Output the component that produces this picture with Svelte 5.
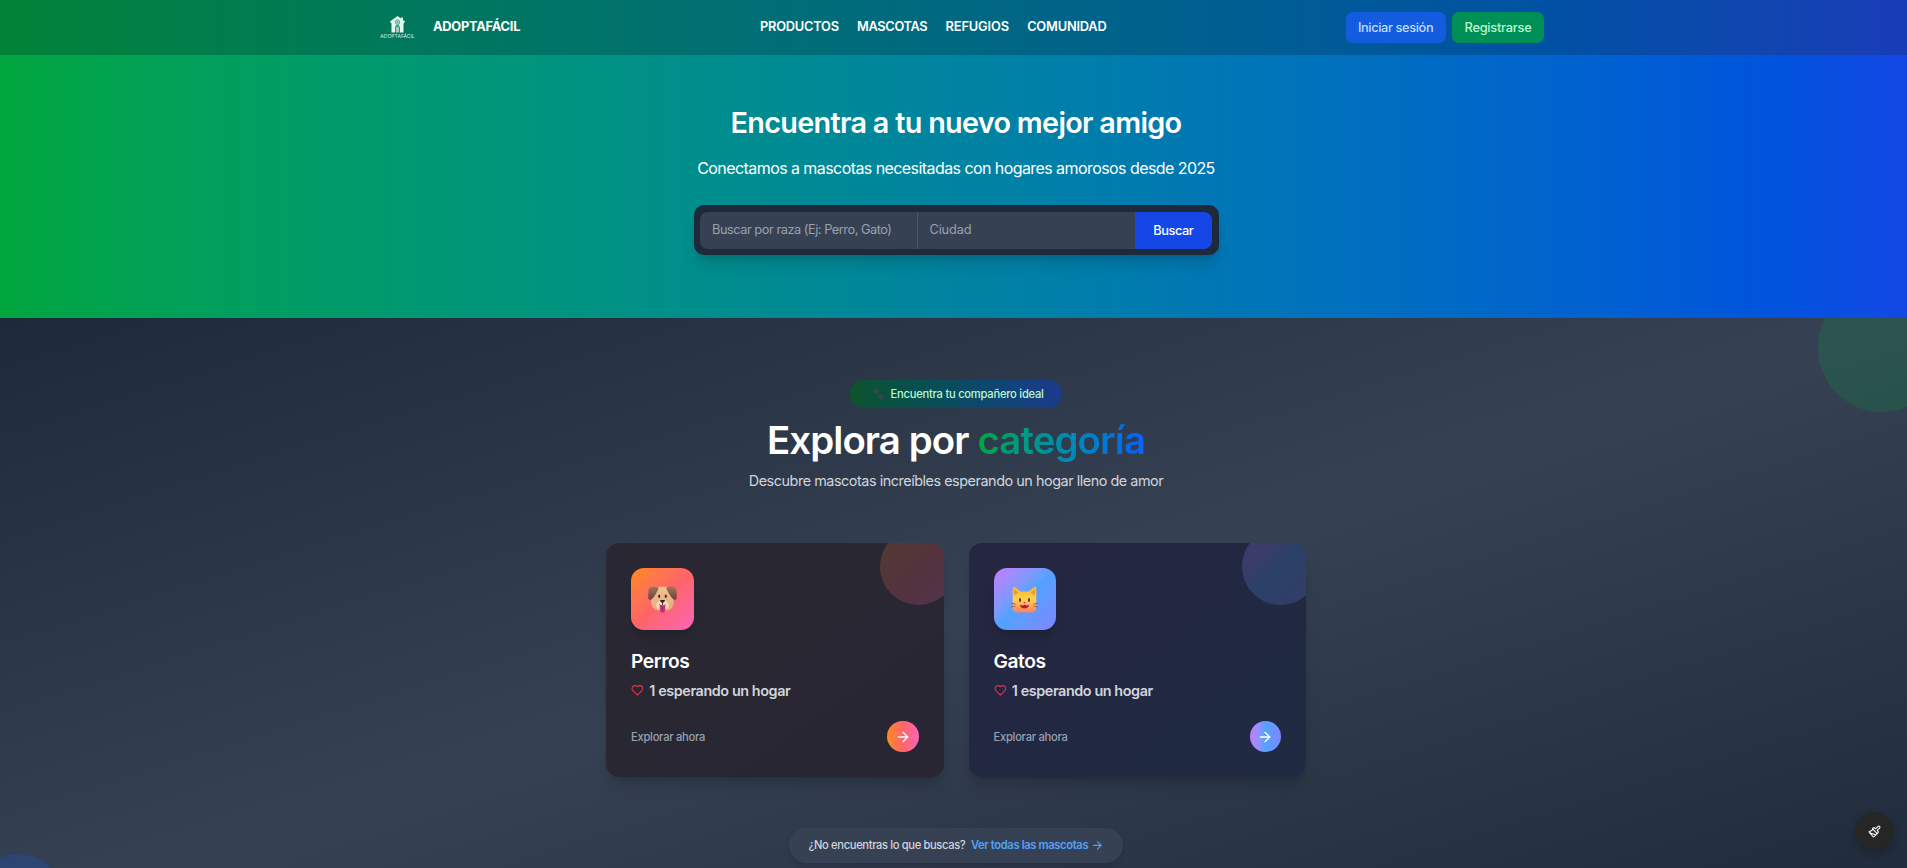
<script>
  const links = [
    { label: 'PRODUCTOS', spacing: -0.22 },
    { label: 'MASCOTAS', spacing: -0.33 },
    { label: 'REFUGIOS', spacing: -0.12 },
    { label: 'COMUNIDAD', spacing: -0.18 }
  ];
  const cards = [
    { kind: 'dog', name: 'Perros', count: 1 },
    { kind: 'cat', name: 'Gatos', count: 1 }
  ];
</script>

{#snippet arrow(size)}
  <svg width={size} height={size} viewBox="0 0 24 24" fill="none" stroke="currentColor" stroke-width="2" stroke-linecap="round" stroke-linejoin="round"><path d="M5 12h14" /><path d="m12 5 7 7-7 7" /></svg>
{/snippet}

<div class="page">
  <header>
    <div class="bar">
      <div class="brand">
        <div class="logo">
          <svg width="15" height="17" viewBox="1.500 0 15 17">
            <path d="M9 0 1.500 5.400 2.500 7.200 3 6.900V16.400h3.700V11.500a2.300 2.300 0 0 1 4.600 0v4.900H15V6.900l.5.300 1-1.800-2-1.400V1.600h-2v1z" fill="#e4f7ef" />
            <circle cx="9" cy="6.200" r="2.200" fill="none" stroke="#2c8b70" stroke-width=".8" />
            <path d="M7.400 9.200h3.200M9 4.800v2.800M7.600 6.200h2.800" stroke="#2c8b70" stroke-width=".6" />
            <path d="M7.500 16.400v-4.600a1.500 1.500 0 0 1 3 0v4.600z" fill="#9fd3c0" />
          </svg>
          <span>ADOPTAFÁCIL</span>
        </div>
        <strong>ADOPTAFÁCIL</strong>
      </div>
      <nav>
        {#each links as l}<a href="#top" style:letter-spacing="{l.spacing}px">{l.label}</a>{/each}
      </nav>
      <div class="auth">
        <button class="login">Iniciar sesión</button>
        <button class="signup">Registrarse</button>
      </div>
    </div>
  </header>

  <section class="hero">
    <h1>Encuentra a tu nuevo mejor amigo</h1>
    <p>Conectamos a mascotas necesitadas con hogares amorosos desde 2025</p>
    <div class="search">
      <div class="field breed">Buscar por raza (Ej: Perro, Gato)</div>
      <div class="field city">Ciudad</div>
      <button>Buscar</button>
    </div>
  </section>

  <section class="explore">
    <div class="orb green"></div>
    <div class="orb blue"></div>
    <div class="tag">
      <svg width="11" height="12" viewBox="0 0 11 12" fill="#4b4358">
        <ellipse cx="3" cy="4" rx="1.7" ry="1.4" /><circle cx=".9" cy="2.6" r=".7" /><circle cx="2.2" cy="1.2" r=".8" /><circle cx="4" cy="1.2" r=".8" /><circle cx="5.2" cy="2.6" r=".7" />
        <ellipse cx="7.8" cy="9.6" rx="1.7" ry="1.4" /><circle cx="5.7" cy="8.2" r=".7" /><circle cx="7" cy="6.8" r=".8" /><circle cx="8.8" cy="6.8" r=".8" /><circle cx="10.1" cy="8.2" r=".7" />
      </svg>
      <span>Encuentra tu compañero ideal</span>
    </div>
    <h2>Explora por <em>categoría</em></h2>
    <p class="lead">Descubre mascotas increíbles esperando un hogar lleno de amor</p>

    <div class="cards">
      {#each cards as c}
        <article class={c.kind}>
          <div class="bubble"></div>
          <div class="tile">
            {#if c.kind === 'dog'}
              <svg width="29" height="27" viewBox="0 0 29 27">
                <defs>
                  <linearGradient id="fur" x1="0" y1="0" x2="0" y2="1"><stop offset="0" stop-color="#f2c08e" /><stop offset="1" stop-color="#e9ab80" /></linearGradient>
                  <linearGradient id="ear" x1="0" y1="0" x2="0" y2="1"><stop offset="0" stop-color="#a87358" /><stop offset="1" stop-color="#65413f" /></linearGradient>
                </defs>
                <path d="M7 .8h15c2.400 4 3.700 9 3.700 15 0 5-3 8.700-7 8.700h-8.400c-4 0-7-3.700-7-8.700C3.300 9.800 4.600 4.800 7 .8z" fill="url(#fur)" />
                <path d="M8.800.8C4 0 .6 1.800.4 5L.2 11.500c.1 2.300 2.300 3 3.800 1.600C6.500 10.500 9 6.500 10.500 2.500 10.700 1.500 10 1 8.800.8z" fill="url(#ear)" />
                <path d="M20.200.8C25 0 28.400 1.800 28.600 5l.2 6.500c-.1 2.300-2.300 3-3.800 1.600-2.500-2.600-5-6.600-6.500-10.600-.2-1 .5-1.500 1.700-1.700z" fill="url(#ear)" />
                <path d="M14.500 14c3.200 0 6.300 2.400 6.300 5.300s-2.300 4.900-6.300 4.900-6.300-2-6.300-4.900 3.100-5.300 6.300-5.300z" fill="#f8d9b8" />
                <ellipse cx="11.200" cy="10.200" rx="1" ry="1.700" fill="#35242b" /><ellipse cx="17.800" cy="10.200" rx="1" ry="1.700" fill="#35242b" />
                <path d="M12.200 14h4.600c.3 1.600-1.200 2.600-2.300 2.600s-2.600-1-2.300-2.600z" fill="#35242b" />
                <path d="M14.500 16v3M11.300 18.500c.6 1.700 2.500 1.600 3.200.5.700 1.100 2.600 1.200 3.200-.5" fill="none" stroke="#35242b" stroke-width=".9" />
                <path d="M11.700 20h5.600v3.300c0 4.500-5.600 4.500-5.600 0z" fill="#c92f79" /><path d="M14.500 20.300v3.500" stroke="#8e205f" stroke-width=".7" />
              </svg>
            {:else}
              <svg width="27" height="27" viewBox="0 0 27 27">
                <defs><linearGradient id="cat" x1="0" y1="0" x2="0" y2="1"><stop offset="0" stop-color="#f9b52d" /><stop offset=".5" stop-color="#ffd14b" /><stop offset="1" stop-color="#ff8067" /></linearGradient></defs>
                <path d="M1.700 2.200C1.700.6 3 .4 4 1.200L9.500 5.400h8L23 1.200c1-.8 2.300-.6 2.300 1V21c0 3.500-2 5.400-5 5.400H6.700c-3 0-5-1.900-5-5.400z" fill="url(#cat)" />
                <path d="M3 3.500v6l4.500-3zM24 3.500v6l-4.500-3z" fill="#e7832b" opacity=".65" />
                <ellipse cx="9" cy="14" rx="1" ry="1.900" fill="#4c2431" /><ellipse cx="18" cy="14" rx="1" ry="1.900" fill="#4c2431" />
                <path d="M12.200 16h2.600l-1.300 1.800z" fill="#e3347c" />
                <path d="M9 18.800c2 1.200 3.500.9 4.500-.2 1 1.100 2.500 1.400 4.500.2-.2 5-8.800 5-9 0z" fill="#a61d43" />
                <path d="M0 17.300l4.500.7M0 21l4.500-.8M27 17.300l-4.500.7M27 21l-4.500-.8" stroke="#bd4d48" stroke-width=".9" />
              </svg>
            {/if}
          </div>
          <h3>{c.name}</h3>
          <div class="count">
            <svg width="12.800" height="12.800" viewBox="0 0 24 24" fill="none" stroke="#e7304a" stroke-width="2" stroke-linecap="round" stroke-linejoin="round"><path d="M19 14c1.490-1.460 3-3.210 3-5.500A5.500 5.500 0 0 0 16.500 3c-1.760 0-3 .5-4.500 2-1.500-1.500-2.740-2-4.500-2A5.500 5.500 0 0 0 2 8.500c0 2.300 1.500 4.050 3 5.500l7 7Z" /></svg>
            <span>{c.count} esperando un hogar</span>
          </div>
          <div class="foot"><span>Explorar ahora</span><div class="go">{@render arrow(16)}</div></div>
        </article>
      {/each}
    </div>

    <div class="more">
      <span>¿No encuentras lo que buscas?</span>
      <a href="#top">Ver todas las mascotas</a>
      {@render arrow(12.8)}
    </div>
  </section>

  <button class="fab" aria-label="Tema">
    <svg width="13" height="13" viewBox="0 0 24 24" fill="none" stroke="#fff" stroke-width="2" stroke-linecap="round" stroke-linejoin="round"><path d="m14.622 17.897-10.680-2.913" /><path d="M18.376 2.622a1 1 0 1 1 3.002 3.002L17.360 9.643a.5.5 0 0 0 0 .707l.944.944a2.410 2.410 0 0 1 0 3.408l-.944.944a.5.5 0 0 1-.707 0L8.354 7.348a.5.5 0 0 1 0-.707l.944-.944a2.410 2.410 0 0 1 3.408 0l.944.944a.5.5 0 0 0 .707 0z" /><path d="M9 8c-1.804 2.710-3.970 3.460-6.583 3.948a.507.507 0 0 0-.302.819l7.320 8.883a1 1 0 0 0 1.185.204C12.735 20.405 16 16.792 16 15" /></svg>
  </button>
</div>

<style>
  :global(body) { overflow: hidden; background: #1e2939; }
  .page { width: 1912px; height: 868px; overflow: hidden; font-family: Inter, "Liberation Sans", sans-serif; color: #fff; }
  * { box-sizing: border-box; }
  h1, h2, h3, p { margin: 0; }
  svg { display: block; flex: none; }
  button { border: 0; padding: 0; font: inherit; color: inherit; white-space: nowrap; }
  a { color: inherit; text-decoration: none; }

  header { height: 55px; background: linear-gradient(to right in oklab, #008236, #193cb8); }
  .bar { width: 1164px; height: 54px; margin-left: 380px; display: flex; align-items: center; justify-content: space-between; font-size: 12.8px; }
  .brand { width: 141px; display: flex; align-items: center; gap: 18px; }
  .brand strong { font-weight: 700; letter-spacing: -.22px; }
  .logo { width: 35px; display: flex; flex-direction: column; align-items: center; color: #d5f0e5; }
  .logo span { font-size: 5px; line-height: 6px; letter-spacing: .05px; }
  nav { display: flex; gap: 18.200px; font-weight: 600; }
  .bar nav, .brand strong { position: relative; top: -.5px; }
  .auth { display: flex; gap: 6.400px; font-weight: 500; }
  .auth button { height: 31px; border-radius: 7px; }
  .login { width: 100px; background: #135cdf; color: #bedbff; letter-spacing: -.37px; }
  .signup { width: 92px; background: #009057; color: #b9f8cf; letter-spacing: -.24px; }

  .hero { height: 263px; padding-top: 49.500px; display: flex; flex-direction: column; align-items: center; background: linear-gradient(to right in oklab, #00a63e, #1447e6); }
  h1 { font-size: 28.800px; line-height: 36px; font-weight: 600; letter-spacing: -.7px; }
  .hero p { margin-top: 15.500px; font-size: 16px; line-height: 24px; letter-spacing: -.57px; }
  .search { margin-top: 25px; width: 525px; height: 50px; padding: 0 6.500px; border-radius: 10px; background: #1e2939; display: flex; align-items: center; font-size: 12.800px; box-shadow: 0 12px 16px -3px #0002, 0 5px 6px -4px #0002; }
  .field { height: 37px; line-height: 36px; padding-left: 12px; background: #364153; color: #99a1af; }
  .breed { width: 217.500px; border-radius: 8px 0 0 8px; border-right: 1px solid #4a5565; letter-spacing: -.48px; }
  .city { width: 217px; letter-spacing: -.18px; }
  .search button { flex: 1; height: 37px; border-radius: 0 8px 8px 0; background: #1447e6; font-weight: 500; letter-spacing: -.45px; }

  .explore { position: relative; height: 602px; padding-top: 62px; overflow: hidden; display: flex; flex-direction: column; align-items: center; background: linear-gradient(to bottom right, #1e2939, #364153, #1e2939); }
  .orb { position: absolute; border-radius: 50%; }
  .green { width: 128px; height: 128px; right: -34px; top: -34px; background: #00a63e33; }
  .blue { width: 96px; height: 96px; left: -30px; bottom: -30px; background: #155dfc33; }
  .tag { width: 212px; height: 28px; padding-left: 23px; border-radius: 14px; display: flex; align-items: center; gap: 6.500px; font-size: 11.200px; font-weight: 500; color: #b9f8cf; letter-spacing: -.25px; white-space: nowrap; background: linear-gradient(to right in oklab, #0d542b, #1c398e); }
  h2 { margin-top: 7.500px; font-size: 38.400px; line-height: 48px; font-weight: 600; letter-spacing: -.9px; }
  em { font-style: normal; color: transparent; background: linear-gradient(to right in oklab, #00a63e, #155dfc); background-clip: text; -webkit-background-clip: text; }
  .lead { margin-top: 6.500px; font-size: 14.400px; line-height: 22px; color: #d1d5dc; letter-spacing: -.46px; }
  .cards { margin-top: 51px; display: flex; gap: 25px; }
  article { position: relative; width: 337.500px; height: 234px; padding: 25px; border-radius: 13px; overflow: hidden; }
  .cards article { box-shadow: 0 12px 16px -3px #0002, 0 5px 6px -4px #0002; }
  .dog { background: linear-gradient(to bottom right, #2a2833, #272632); --stops: #ff8904, #ff6467, #fb64b6; }
  .cat { background: linear-gradient(to bottom right, #26263f, #222842, #1f2b43); --stops: #c27aff, #51a2ff, #7c86ff; }
  .bubble { position: absolute; right: -13px; top: -15px; width: 77px; height: 77px; border-radius: 50%; opacity: .2; background: linear-gradient(to bottom right in oklab, var(--stops)); }
  .tile { width: 62.500px; height: 62px; border-radius: 13px; display: grid; place-items: center; background: linear-gradient(to bottom right in oklab, var(--stops)); box-shadow: 0 8px 12px -3px #0003; }
  h3 { margin-top: 18px; font-size: 19.200px; line-height: 26px; font-weight: 600; letter-spacing: -.4px; }
  .count { margin-top: 6px; height: 20px; display: flex; align-items: center; gap: 5.500px; font-size: 14.400px; font-weight: 600; color: #d1d5dc; letter-spacing: -.42px; }
  .foot { margin-top: 21px; height: 31px; display: flex; align-items: center; justify-content: space-between; font-size: 11.200px; font-weight: 500; color: #99a1af; letter-spacing: -.27px; }
  .go { width: 31.500px; height: 31.500px; border-radius: 50%; display: grid; place-items: center; color: #fff; background: linear-gradient(to right in oklab, var(--stops)); }
  .more { margin-top: 50.500px; width: 334px; height: 35px; padding-left: 19.500px; border-radius: 18px; display: flex; align-items: center; font-size: 11.200px; font-weight: 500; color: #d1d5dc; background: #364153; white-space: nowrap; box-shadow: 0 3px 5px -1px #0002; letter-spacing: -.37px; }
  .more a { margin: 0 3px 0 5.500px; color: #51a2ff; font-weight: 600; letter-spacing: -.36px; }
  .more :global(svg) { color: #51a2ff; }
  .fab { position: absolute; left: 1855px; top: 812px; width: 38px; height: 38px; border-radius: 50%; display: grid; place-items: center; background: #262626; box-shadow: 0 4px 8px #0003; }
</style>
